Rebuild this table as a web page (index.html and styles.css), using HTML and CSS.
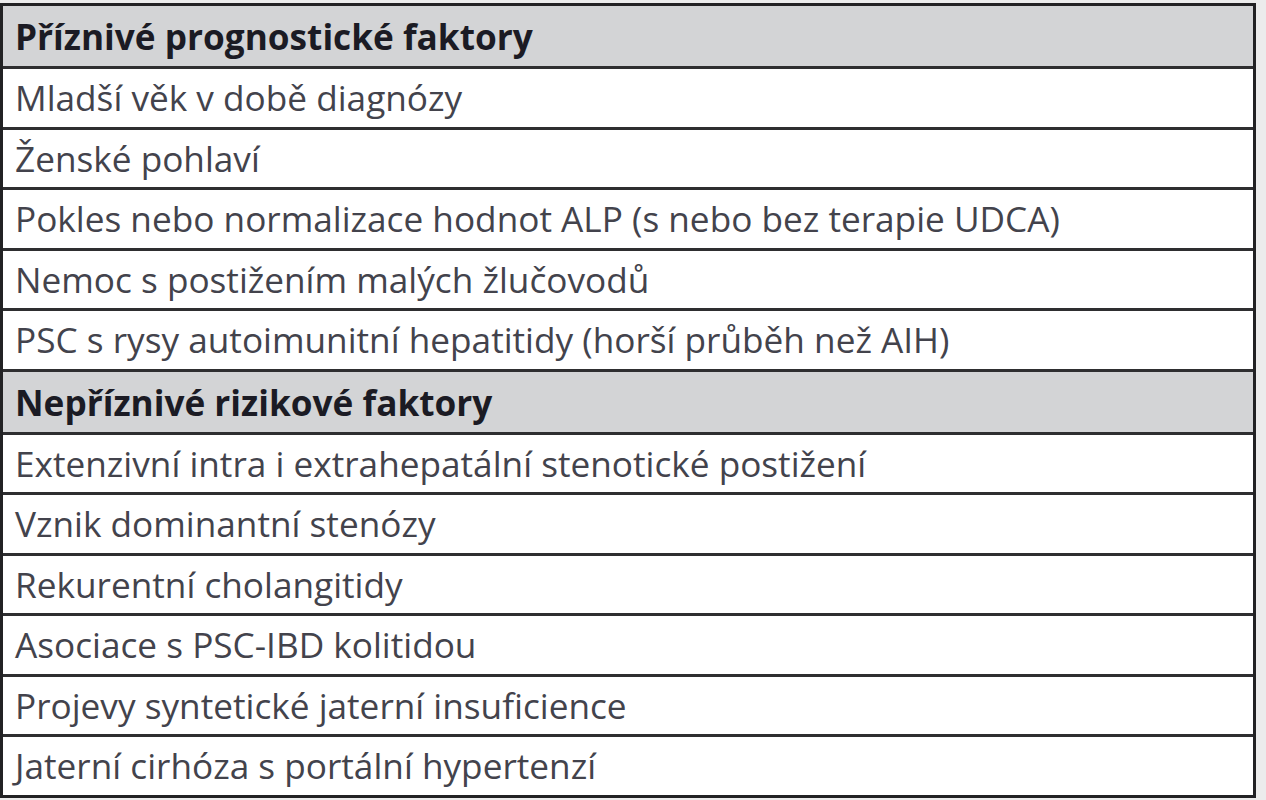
FILE: index.html
```html
<!DOCTYPE html>
<html lang="cs">
<head>
<meta charset="utf-8">
<title>Prognostické faktory PSC</title>
<link rel="stylesheet" href="styles.css">
</head>
<body>
<div class="tbl">
  <div class="row head">Příznivé prognostické faktory</div>
  <div class="row">Mladší věk v době diagnózy</div>
  <div class="row">Ženské pohlaví</div>
  <div class="row">Pokles nebo normalizace hodnot ALP (s nebo bez terapie UDCA)</div>
  <div class="row">Nemoc s postižením malých žlučovodů</div>
  <div class="row">PSC s rysy autoimunitní hepatitidy (horší průběh než AIH)</div>
  <div class="row head">Nepříznivé rizikové faktory</div>
  <div class="row">Extenzivní intra i extrahepatální stenotické postižení</div>
  <div class="row">Vznik dominantní stenózy</div>
  <div class="row">Rekurentní cholangitidy</div>
  <div class="row">Asociace s PSC-IBD kolitidou</div>
  <div class="row">Projevy syntetické jaterní insuficience</div>
  <div class="row">Jaterní cirhóza s portální hypertenzí</div>
</div>
</body>
</html>
```
FILE: styles.css
```css
html, body {
  margin: 0;
  padding: 0;
  background: #ececec;
}
body {
  padding-top: 3px;
  font-family: "Open Sans", "Noto Sans", sans-serif;
}
.tbl {
  box-sizing: border-box;
  width: 1256px;
  border: 3px solid #222224;
  background: #ffffff;
  display: flex;
  flex-direction: column;
}
.row {
  height: 57.5px;
  line-height: 57.5px;
  padding-left: 12px;
  font-size: 35.2px;
  color: #43434c;
  white-space: nowrap;
  border-top: 3px solid #2e2e30;
}
.row:first-child {
  border-top: none;
}
.head {
  background: #d3d4d6;
  color: #1b1b24;
  font-weight: 700;
  height: 60px;
  line-height: 60px;
}
```
